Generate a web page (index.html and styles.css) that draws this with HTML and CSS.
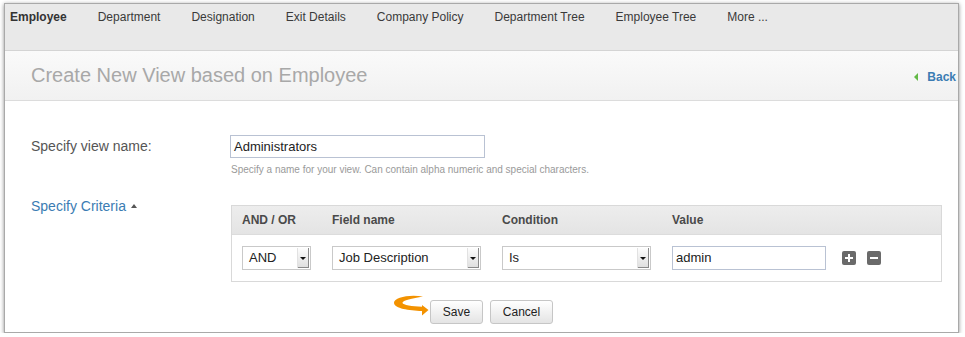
FILE: index.html
```html
<!DOCTYPE html>
<html>
<head>
<meta charset="utf-8">
<link rel="stylesheet" href="styles.css">
</head>
<body>
<div class="frame">
  <nav class="nav">
    <span class="nav-item active">Employee</span>
    <span class="nav-item">Department</span>
    <span class="nav-item">Designation</span>
    <span class="nav-item">Exit Details</span>
    <span class="nav-item">Company Policy</span>
    <span class="nav-item">Department Tree</span>
    <span class="nav-item">Employee Tree</span>
    <span class="nav-item">More ...</span>
  </nav>
  <header class="head">
    <h1 class="title">Create New View based on Employee</h1>
    <a class="back"><span class="back-arrow"></span>Back</a>
  </header>
  <main class="content">
    <div class="row">
      <label class="label">Specify view name:</label>
      <div class="field">
        <div class="text-input name-input">Administrators</div>
        <div class="hint">Specify a name for your view. Can contain alpha numeric and special characters.</div>
      </div>
    </div>
    <div class="row criteria-row">
      <div class="label criteria">Specify Criteria <span class="caret-up"></span></div>
      <div class="field">
        <div class="ctable">
          <div class="chead">
            <div class="cell">AND / OR</div>
            <div class="cell">Field name</div>
            <div class="cell">Condition</div>
            <div class="cell">Value</div>
            <div class="cell"></div>
          </div>
          <div class="crow">
            <div class="cell"><div class="sel w-andor"><span class="sel-text">AND</span><span class="sel-btn"><i class="tri"></i></span></div></div>
            <div class="cell"><div class="sel w-wide"><span class="sel-text">Job Description</span><span class="sel-btn"><i class="tri"></i></span></div></div>
            <div class="cell"><div class="sel w-wide"><span class="sel-text">Is</span><span class="sel-btn"><i class="tri"></i></span></div></div>
            <div class="cell"><div class="text-input value-input">admin</div></div>
            <div class="cell icons">
              <span class="ico"><i class="bar h"></i><i class="bar v"></i></span>
              <span class="ico"><i class="bar h"></i></span>
            </div>
          </div>
        </div>
      </div>
    </div>
    <div class="actions">
      <svg class="swoosh" width="36" height="22" viewBox="0 0 36 22">
        <path d="M30,1.5 C16,-1 0.5,2.5 1,8 C1.5,13.5 16,15.5 29,16 L29,20.5 L35.5,15 L29,10 L29,11.8 C19,11.3 10,10 9.5,8 C9,5.5 19,3.5 30,1.5 Z" fill="#f39200"/>
      </svg>
      <button class="btn btn-save">Save</button>
      <button class="btn btn-cancel">Cancel</button>
    </div>
  </main>
</div>
</body>
</html>
```
FILE: styles.css
```css
html, body {
  margin: 0;
  padding: 0;
  background: #fff;
}
body {
  font-family: "Liberation Sans", Arial, Helvetica, sans-serif;
  color: #333;
}
.frame {
  margin: 3px 0 0 4px;
  width: 955px;
  height: 330px;
  box-sizing: border-box;
  border: 1px solid #a9a9a9;
  box-shadow: 0 1px 4px rgba(0, 0, 0, 0.45);
  overflow: hidden;
  background: #fff;
}
.nav {
  display: flex;
  gap: 31px;
  height: 47px;
  box-sizing: border-box;
  padding: 6px 0 0 5px;
  background: #e9e9e9;
  border-bottom: 1px solid #d4d4d4;
}
.nav-item {
  font-size: 12px;
  line-height: 15px;
  color: #3a3a3a;
}
.nav-item.active {
  font-weight: bold;
  color: #333;
}
.head {
  display: flex;
  align-items: center;
  justify-content: space-between;
  height: 50px;
  box-sizing: border-box;
  padding: 0 2px 0 26px;
  background: linear-gradient(#fafafa, #f1f1f1);
  border-bottom: 1px solid #dcdcdc;
}
.title {
  margin: 0;
  font-size: 20px;
  font-weight: normal;
  color: #a8a8a8;
  line-height: 24px;
  padding-bottom: 1px;
}
.back {
  display: flex;
  align-items: center;
  font-size: 12px;
  font-weight: bold;
  color: #3b7cb3;
  padding-top: 2px;
}
.back-arrow {
  width: 0;
  height: 0;
  border-top: 4px solid transparent;
  border-bottom: 4px solid transparent;
  border-right: 4px solid #63b946;
  margin-right: 9px;
}
.content {
  padding: 34px 0 0 26px;
}
.row {
  display: flex;
  align-items: flex-start;
}
.label {
  width: 199px;
  flex: none;
  font-size: 14px;
  color: #555;
  line-height: 23px;
}
.field {
  display: flex;
  flex-direction: column;
}
.text-input {
  box-sizing: border-box;
  height: 23px;
  border: 1px solid #b9c2d3;
  background: #fff;
  font-size: 13px;
  line-height: 21px;
  padding-left: 3px;
  color: #222;
}
.name-input {
  width: 255px;
}
.hint {
  margin-top: 6px;
  padding-left: 1px;
  font-size: 10px;
  line-height: 12px;
  color: #9a9a9a;
}
.criteria-row {
  margin-top: 22px;
}
.criteria {
  color: #3b7cb3;
  line-height: 16px;
  display: flex;
  align-items: center;
}
.caret-up {
  display: inline-block;
  width: 0;
  height: 0;
  margin-left: 5px;
  border-left: 3px solid transparent;
  border-right: 3px solid transparent;
  border-bottom: 4px solid #555;
}
.ctable {
  margin-top: 7px;
  margin-left: 1px;
  width: 711px;
  box-sizing: border-box;
  border: 1px solid #d9d9d9;
}
.chead, .crow {
  display: grid;
  grid-template-columns: 90px 170px 170px 170px 1fr;
}
.chead {
  height: 28px;
  background: linear-gradient(#ededed, #e4e4e4);
  border-bottom: 1px solid #dcdcdc;
}
.chead .cell {
  padding-left: 10px;
  font-size: 12px;
  font-weight: bold;
  color: #4a4a4a;
  line-height: 28px;
}
.crow {
  height: 46px;
  align-items: center;
}
.crow .cell {
  padding-left: 10px;
}
.sel {
  display: flex;
  box-sizing: border-box;
  height: 24px;
  border: 1px solid #c9c9c9;
  background: #fff;
}
.w-andor { width: 69px; }
.w-wide { width: 149px; }
.sel-text {
  flex: 1;
  font-size: 13px;
  line-height: 22px;
  padding-left: 6px;
  color: #222;
}
.sel-btn {
  width: 11px;
  margin: 1px;
  display: flex;
  align-items: center;
  justify-content: center;
  background: linear-gradient(#fdfdfd, #dedede);
  border-left: 1px solid #e2e2e2;
  box-shadow: inset -1px -1px 0 #8a8a8a;
}
.tri {
  width: 0;
  height: 0;
  border-left: 3px solid transparent;
  border-right: 3px solid transparent;
  border-top: 3px solid #111;
  margin-right: 1px;
}
.value-input {
  width: 154px;
  height: 24px;
  line-height: 22px;
}
.icons {
  display: flex;
  gap: 11px;
}
.ico {
  position: relative;
  width: 14px;
  height: 14px;
  border-radius: 2px;
  background: #6a6a6a;
}
.bar {
  position: absolute;
  background: #fff;
}
.bar.h {
  left: 3px;
  top: 6px;
  width: 8px;
  height: 2px;
}
.bar.v {
  left: 6px;
  top: 3px;
  width: 2px;
  height: 8px;
}
.actions {
  display: flex;
  align-items: flex-start;
  margin: 18px 0 0 362px;
}
.swoosh {
  margin-top: -5px;
  margin-right: 1px;
}
.btn {
  height: 24px;
  box-sizing: border-box;
  border: 1px solid #c6c6c6;
  border-radius: 3px;
  background: linear-gradient(#ffffff, #e4e4e4);
  font-family: "Liberation Sans", Arial, sans-serif;
  font-size: 12px;
  color: #222;
  padding: 0;
  margin-right: 7px;
}
.btn-save {
  width: 53px;
}
.btn-cancel {
  width: 63px;
}
```
